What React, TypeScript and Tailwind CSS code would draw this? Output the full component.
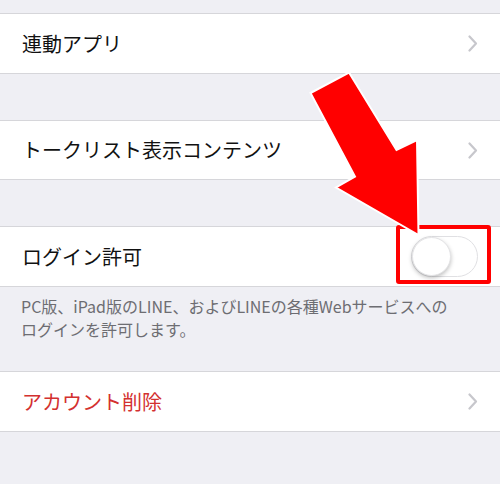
const font = { fontFamily: '"Noto Sans CJK JP", "Noto Sans", sans-serif' }

function Chevron() {
  return (
    <svg width="10" height="17" viewBox="0 0 10 17" className="shrink-0">
      <path d="M1.5 1.5 L8 8.5 L1.5 15.5" fill="none" stroke="#c7c7cc" strokeWidth="2.2" strokeLinecap="round" strokeLinejoin="round" />
    </svg>
  )
}

function Row({ label, red, h, children }: { label: string; red?: boolean; h: string; children?: React.ReactNode }) {
  return (
    <div className={`flex items-center justify-between bg-white border-y border-[#d6d6da] pl-[22px] pr-[22px] ${h}`}>
      <span className={`text-[20px] leading-none ${red ? 'text-[#d3302f]' : 'text-[#111]'}`}>{label}</span>
      {children ?? <Chevron />}
    </div>
  )
}

export default function App() {
  return (
    <div className="relative w-[500px] h-[484px] overflow-hidden bg-[#efeff4]" style={font}>
      <div className="h-[13px]" />
      <Row label="連動アプリ" h="h-[61px]" />
      <div className="h-[46px]" />
      <Row label="トークリスト表示コンテンツ" h="h-[60px]" />
      <div className="h-[46px]" />
      <Row label="ログイン許可" h="h-[61px]">
        <div className="relative w-[67px] h-[41px] rounded-full border border-[#e0e0e3] bg-white">
          <div className="absolute left-0 top-0 w-[39px] h-[39px] rounded-full bg-white border border-[#e4e4e6] shadow-[0_2px_4px_rgba(0,0,0,0.25)]" />
        </div>
      </Row>
      <div className="h-[84px] px-[21px] pt-[8px] text-[16px] leading-[23px] text-[#6d6d72]">
        <p>PC版、iPad版のLINE、およびLINEの各種Webサービスへの</p>
        <p>ログインを許可します。</p>
      </div>
      <Row label="アカウント削除" red h="h-[61px]" />

      {/* red highlight box */}
      <div className="absolute left-[396px] top-[225px] w-[95px] h-[59px] border-[4px] border-[#ff0000] rounded-[3px]" />

      {/* arrow */}
      <svg className="absolute left-0 top-0" width="500" height="484">
        <polygon
          points="310.5,93 349,72.5 396.5,150 417,140 418.5,235 336,187.5 355,176.5"
          fill="#ff0000"
          stroke="#ffffff"
          strokeWidth="2"
          strokeLinejoin="miter"
        />
      </svg>
    </div>
  )
}
